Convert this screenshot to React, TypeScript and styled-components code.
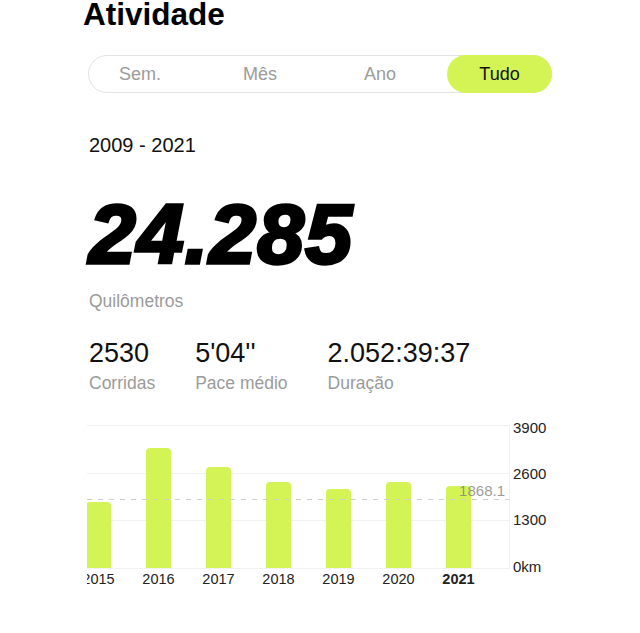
import styled, { createGlobalStyle } from 'styled-components';

const GlobalStyle = createGlobalStyle`
  html, body {
    margin: 0;
    padding: 0;
    background: #fff;
  }

  body {
    font-family: 'Liberation Sans', Arial, sans-serif;
    color: #111;
  }
`;

const Page = styled.main`
  width: 640px;
  height: 633px;
  overflow: hidden;
  padding-left: 89px;
  box-sizing: border-box;
`;

const Title = styled.h1`
  margin: -4px 0 0 -6px;
  font-size: 31.5px;
  font-weight: 700;
  line-height: 1.2;
  color: #000;
`;

const Segmented = styled.div`
  margin: 21px 0 0 -1px;
  width: 464px;
  height: 38px;
  box-sizing: border-box;
  border: 1px solid #e3e3e3;
  border-radius: 19px;
`;

const SegmentGrid = styled.div`
  display: grid;
  grid-template-columns: repeat(3, 120px) 1fr;
  margin-left: -9px;
  height: 100%;
`;

const Segment = styled.div<{ $active?: boolean }>`
  display: flex;
  align-items: center;
  justify-content: center;
  padding-top: 2px;
  font-size: 18px;
  color: ${(p) => (p.$active ? '#111' : '#9b9b9b')};
  background: ${(p) => (p.$active ? '#d3f454' : 'transparent')};
  border-radius: 19px;
  margin: ${(p) => (p.$active ? '-1px -1px -1px 7px' : '0')};
`;

const Range = styled.div`
  margin-top: 40px;
  font-size: 20px;
  line-height: 1.2;
  color: #111;
`;

const BigNumber = styled.div`
  margin-top: 35.5px;
  font-size: 84px;
  line-height: 1;
  font-weight: 700;
  font-style: italic;
  color: #000;
  -webkit-text-stroke: 3.4px #000;
  letter-spacing: 1.2px;
`;

const Unit = styled.div`
  margin-top: 14.5px;
  font-size: 17.5px;
  line-height: 1.2;
  color: #9b9b9b;
`;

const Stats = styled.div`
  display: flex;
  gap: 40px;
  margin-top: 26px;
`;

const Stat = styled.div`
  display: flex;
  flex-direction: column;
  gap: 4px;
`;

const StatValue = styled.div`
  font-size: 27px;
  line-height: 31px;
  color: #111;
`;

const StatLabel = styled.div`
  font-size: 17.5px;
  line-height: 1.2;
  color: #9b9b9b;
`;

const Chart = styled.section`
  display: flex;
  align-items: flex-start;
  margin: 31px 0 0 -2px;
`;

const ChartMain = styled.div`
  width: 423px;
  overflow: hidden;
`;

const Plot = styled.div`
  position: relative;
  height: 144px;
  border-right: 1px solid #f1f1f1;
  background-image: repeating-linear-gradient(
    to bottom,
    #f1f1f1 0,
    #f1f1f1 1px,
    transparent 1px,
    transparent 47.667px
  );
`;

const Columns = styled.div`
  display: flex;
  align-items: flex-end;
  height: 143px;
  margin-left: -18.5px;
`;

const Column = styled.div`
  width: 60px;
  flex: none;
  display: flex;
  justify-content: center;
  align-items: flex-end;
  height: 100%;
`;

const Bar = styled.div`
  width: 25px;
  background: #d3f454;
  border-radius: 4px 4px 0 0;
`;

const AvgLine = styled.div`
  position: absolute;
  left: 0;
  right: 0;
  height: 1px;
  background-image: repeating-linear-gradient(
    to right,
    #cfcfcf 0,
    #cfcfcf 5px,
    transparent 5px,
    transparent 11px
  );
`;

const AvgLabel = styled.span`
  position: absolute;
  right: 4px;
  font-size: 15px;
  line-height: 1;
  color: rgba(120, 120, 120, 0.75);
`;

const Years = styled.div`
  display: flex;
  margin: 1px 0 0 -18.5px;
`;

const Year = styled.div<{ $current?: boolean }>`
  width: 60px;
  flex: none;
  text-align: center;
  font-size: 14.5px;
  line-height: 18px;
  color: #222;
  font-weight: ${(p) => (p.$current ? 700 : 400)};
`;

const Axis = styled.div`
  display: flex;
  flex-direction: column;
  justify-content: space-between;
  height: 157px;
  margin: -6px 0 0 3px;
`;

const AxisLabel = styled.div`
  font-size: 15px;
  line-height: 18px;
  color: #222;
`;

const MAX = 3900;
const PLOT = 143;
const AVERAGE = 1868.1;

const years = [
  { year: '2015', km: 1800 },
  { year: '2016', km: 3270 },
  { year: '2017', km: 2755 },
  { year: '2018', km: 2345 },
  { year: '2019', km: 2155 },
  { year: '2020', km: 2345 },
  { year: '2021', km: 2236 },
];

const segments = ['Sem.', 'Mês', 'Ano', 'Tudo'];

const stats = [
  { value: '2530', label: 'Corridas' },
  { value: "5'04''", label: 'Pace médio' },
  { value: '2.052:39:37', label: 'Duração' },
];

export default function App() {
  const avgBottom = (AVERAGE / MAX) * PLOT;

  return (
    <>
      <GlobalStyle />
      <Page>
        <Title>Atividade</Title>
        <Segmented>
          <SegmentGrid>
            {segments.map((s) => (
              <Segment key={s} $active={s === 'Tudo'}>
                {s}
              </Segment>
            ))}
          </SegmentGrid>
        </Segmented>
        <Range>2009 - 2021</Range>
        <BigNumber>24.285</BigNumber>
        <Unit>Quilômetros</Unit>
        <Stats>
          {stats.map((s) => (
            <Stat key={s.label}>
              <StatValue>{s.value}</StatValue>
              <StatLabel>{s.label}</StatLabel>
            </Stat>
          ))}
        </Stats>
        <Chart>
          <ChartMain>
            <Plot>
              <Columns>
                {years.map((y) => (
                  <Column key={y.year}>
                    <Bar style={{ height: (y.km / MAX) * PLOT }} />
                  </Column>
                ))}
              </Columns>
              <AvgLine style={{ bottom: avgBottom }} />
              <AvgLabel style={{ bottom: avgBottom + 2 }}>1868.1</AvgLabel>
            </Plot>
            <Years>
              {years.map((y) => (
                <Year key={y.year} $current={y.year === '2021'}>
                  {y.year}
                </Year>
              ))}
            </Years>
          </ChartMain>
          <Axis>
            <AxisLabel>3900</AxisLabel>
            <AxisLabel>2600</AxisLabel>
            <AxisLabel>1300</AxisLabel>
            <AxisLabel>0km</AxisLabel>
          </Axis>
        </Chart>
      </Page>
    </>
  );
}
